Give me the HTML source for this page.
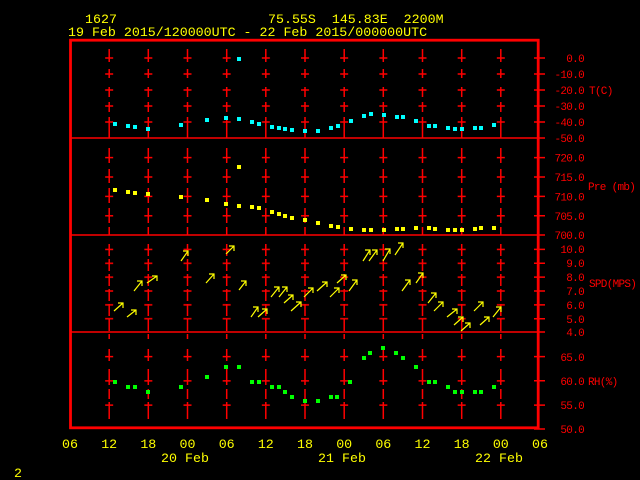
<!DOCTYPE html>
<html><head><meta charset="utf-8"><style>
html,body{margin:0;padding:0;background:#000;width:640px;height:480px;overflow:hidden}
svg{display:block}
text{font-family:"Liberation Mono",monospace}
</style></head><body>
<svg width="640" height="480" viewBox="0 0 640 480" xmlns="http://www.w3.org/2000/svg">
<defs>
<pattern id="pT" patternUnits="userSpaceOnUse" x="105.17" y="50" width="39.1667" height="16"><line x1="0" y1="8" x2="8" y2="8" stroke="#f00" stroke-width="1.5"/></pattern>
<pattern id="pP" patternUnits="userSpaceOnUse" x="105.17" y="147.9" width="39.1667" height="19.4"><line x1="0" y1="9.7" x2="8" y2="9.7" stroke="#f00" stroke-width="1.5"/></pattern>
<pattern id="pS" patternUnits="userSpaceOnUse" x="105.17" y="242.5" width="39.1667" height="13.86"><line x1="0" y1="6.93" x2="8" y2="6.93" stroke="#f00" stroke-width="1.5"/></pattern>
<pattern id="pR" patternUnits="userSpaceOnUse" x="105.17" y="344.5" width="39.1667" height="24.25"><line x1="0" y1="12.12" x2="8" y2="12.12" stroke="#f00" stroke-width="1.5"/></pattern>
</defs>
<g fill="#ffff00" font-size="13.3">
<text x="85" y="23">1627</text>
<text x="268" y="23" xml:space="preserve">75.55S  145.83E  2200M</text>
<text x="68" y="36">19 Feb 2015/120000UTC - 22 Feb 2015/000000UTC</text>
</g>
<!-- grid -->
<g stroke="#f00" stroke-width="1.5" fill="none">
<path stroke-dasharray="13 7 9 9 10 5 10 5 30" d="M109.2 49V138M148.3 49V138M187.5 49V138M226.7 49V138M265.8 49V138M305 49V138M344.2 49V138M383.3 49V138M422.5 49V138M461.7 49V138M500.8 49V138"/>
<path stroke-dasharray="15 6 14 5 15 5 15 4 12" d="M109.2 148V235M148.3 148V235M187.5 148V235M226.7 148V235M265.8 148V235M305 148V235M344.2 148V235M383.3 148V235M422.5 148V235M461.7 148V235M500.8 148V235"/>
<path stroke-dasharray="12 3" d="M109.2 244V339M148.3 244V339M187.5 244V339M226.7 244V339M265.8 244V339M305 244V339M344.2 244V339M383.3 244V339M422.5 244V339M461.7 244V339M500.8 244V339"/>
<path stroke-dasharray="12 8 16 4 10 3 17" d="M109.2 349V419M148.3 349V419M187.5 349V419M226.7 349V419M265.8 349V419M305 349V419M344.2 349V419M383.3 349V419M422.5 349V419M461.7 349V419M500.8 349V419"/>
</g>
<rect x="105" y="50" width="400" height="80" fill="url(#pT)"/>
<rect x="105" y="147.9" width="400" height="77.6" fill="url(#pP)"/>
<rect x="105" y="242.5" width="400" height="83.2" fill="url(#pS)"/>
<rect x="105" y="344.5" width="400" height="72.8" fill="url(#pR)"/>
<!-- frame -->
<g stroke="#f00">
<rect x="70.5" y="40.2" width="467.7" height="387.6" fill="none" stroke-width="2.8"/>
<path stroke-width="1.5" d="M70 138H545M70 235H545M70 332H545"/>
<path stroke-width="1.5" d="M534 58H545M534 74H545M534 90H545M534 106H545M534 122H545M534 157.6H545M534 177H545M534 196.4H545M534 215.8H545M534 249.4H545M534 263.3H545M534 277.1H545M534 291H545M534 304.9H545M534 318.7H545M534 356.6H545M534 380.8H545M534 405.1H545M534 429H545"/>
</g>
<!-- right labels -->
<g fill="#f00" font-size="11" text-anchor="end" letter-spacing="-0.7">
<text x="584" y="62">0.0</text><text x="584" y="78">-10.0</text><text x="584" y="94">-20.0</text><text x="584" y="110">-30.0</text><text x="584" y="126">-40.0</text><text x="584" y="142">-50.0</text>
<text x="584" y="161.5">720.0</text><text x="584" y="181">715.0</text><text x="584" y="200.5">710.0</text><text x="584" y="220">705.0</text><text x="584" y="239">700.0</text>
<text x="584" y="253">10.0</text><text x="584" y="267">9.0</text><text x="584" y="281">8.0</text><text x="584" y="295">7.0</text><text x="584" y="309">6.0</text><text x="584" y="323">5.0</text><text x="584" y="336">4.0</text>
<text x="584" y="361">65.0</text><text x="584" y="385">60.0</text><text x="584" y="409">55.0</text><text x="584" y="433">50.0</text>
</g>
<g fill="#f00" font-size="11" letter-spacing="-0.7">
<text x="589" y="94">T(C)</text>
<text x="588" y="190">Pre (mb)</text>
<text x="589" y="287">SPD(MPS)</text>
<text x="588" y="385">RH(%)</text>
</g>
<!-- T points -->
<g fill="#00ffff">
<rect x="113" y="122" width="4" height="4"/><rect x="126" y="124" width="4" height="4"/><rect x="133" y="125" width="4" height="4"/><rect x="146" y="127" width="4" height="4"/><rect x="179" y="123" width="4" height="4"/><rect x="205" y="118" width="4" height="4"/><rect x="224" y="116" width="4" height="4"/><rect x="237" y="117" width="4" height="4"/><rect x="237" y="57" width="4" height="4"/><rect x="250" y="120" width="4" height="4"/><rect x="257" y="122" width="4" height="4"/><rect x="270" y="125" width="4" height="4"/><rect x="277" y="126" width="4" height="4"/><rect x="283" y="127" width="4" height="4"/><rect x="290" y="128" width="4" height="4"/><rect x="303" y="129" width="4" height="4"/><rect x="316" y="129" width="4" height="4"/><rect x="329" y="126" width="4" height="4"/><rect x="336" y="124" width="4" height="4"/><rect x="349" y="119" width="4" height="4"/><rect x="362" y="114" width="4" height="4"/><rect x="369" y="112" width="4" height="4"/><rect x="382" y="113" width="4" height="4"/><rect x="395" y="115" width="4" height="4"/><rect x="401" y="115" width="4" height="4"/><rect x="414" y="119" width="4" height="4"/><rect x="427" y="124" width="4" height="4"/><rect x="433" y="124" width="4" height="4"/><rect x="446" y="126" width="4" height="4"/><rect x="453" y="127" width="4" height="4"/><rect x="460" y="127" width="4" height="4"/><rect x="473" y="126" width="4" height="4"/><rect x="479" y="126" width="4" height="4"/><rect x="492" y="123" width="4" height="4"/>
</g>
<!-- Pre points -->
<g fill="#ffff00">
<rect x="113" y="188" width="4" height="4"/><rect x="126" y="190" width="4" height="4"/><rect x="133" y="191" width="4" height="4"/><rect x="146" y="192" width="4" height="4"/><rect x="179" y="195" width="4" height="4"/><rect x="205" y="198" width="4" height="4"/><rect x="224" y="202" width="4" height="4"/><rect x="237" y="204" width="4" height="4"/><rect x="237" y="165" width="4" height="4"/><rect x="250" y="205" width="4" height="4"/><rect x="257" y="206" width="4" height="4"/><rect x="270" y="210" width="4" height="4"/><rect x="277" y="212" width="4" height="4"/><rect x="283" y="214" width="4" height="4"/><rect x="290" y="216" width="4" height="4"/><rect x="303" y="218" width="4" height="4"/><rect x="316" y="221" width="4" height="4"/><rect x="329" y="224" width="4" height="4"/><rect x="336" y="225" width="4" height="4"/><rect x="349" y="227" width="4" height="4"/><rect x="362" y="228" width="4" height="4"/><rect x="369" y="228" width="4" height="4"/><rect x="382" y="228" width="4" height="4"/><rect x="395" y="227" width="4" height="4"/><rect x="401" y="227" width="4" height="4"/><rect x="414" y="226" width="4" height="4"/><rect x="427" y="226" width="4" height="4"/><rect x="433" y="227" width="4" height="4"/><rect x="446" y="228" width="4" height="4"/><rect x="453" y="228" width="4" height="4"/><rect x="460" y="228" width="4" height="4"/><rect x="473" y="227" width="4" height="4"/><rect x="479" y="226" width="4" height="4"/><rect x="492" y="226" width="4" height="4"/>
</g>
<!-- wind arrows -->
<g stroke="#ffff00" stroke-width="1.2" fill="none">
<path d="M114 311L123 303M118 303H123V308"/>
<path d="M127 317L136 310M131 310H136V315"/>
<path d="M134 291L142 281M137 281H142V286"/>
<path d="M147 283L157 276M152 276H157V281"/>
<path d="M181 261L188 251M183 251H188V256"/>
<path d="M226 254L234 246M229 246H234V251"/>
<path d="M206 283L214 274M209 274H214V279"/>
<path d="M239 290L246 281M241 281H246V286"/>
<path d="M251 317L258 307M253 307H258V312"/>
<path d="M258 317L267 309M262 309H267V314"/>
<path d="M271 297L279 287M274 287H279V292"/>
<path d="M279 297L287 287M282 287H287V292"/>
<path d="M284 303L293 295M288 295H293V300"/>
<path d="M291 311L301 302M296 302H301V307"/>
<path d="M304 297L313 288M308 288H313V293"/>
<path d="M317 291L327 282M322 282H327V287"/>
<path d="M330 297L339 288M334 288H339V293"/>
<path d="M337 283L346 275M341 275H346V280"/>
<path d="M349 291L357 280M352 280H357V285"/>
<path d="M363 261L370 250M365 250H370V255"/>
<path d="M369 261L377 250M372 250H377V255"/>
<path d="M383 261L390 249M385 249H390V254"/>
<path d="M395 255L403 243M398 243H403V248"/>
<path d="M402 291L410 280M405 280H410V285"/>
<path d="M416 283L423 273M418 273H423V278"/>
<path d="M428 303L436 293M431 293H436V298"/>
<path d="M434 311L443 302M438 302H443V307"/>
<path d="M447 317L457 309M452 309H457V314"/>
<path d="M454 325L463 317M458 317H463V322"/>
<path d="M461 331L470 323M465 323H470V328"/>
<path d="M474 311L483 302M478 302H483V307"/>
<path d="M480 325L489 317M484 317H489V322"/>
<path d="M493 317L501 307M496 307H501V312"/>
</g>
<!-- RH points -->
<g fill="#00ff00">
<rect x="113" y="380" width="4" height="4"/><rect x="126" y="385" width="4" height="4"/><rect x="133" y="385" width="4" height="4"/><rect x="146" y="390" width="4" height="4"/><rect x="179" y="385" width="4" height="4"/><rect x="205" y="375" width="4" height="4"/><rect x="224" y="365" width="4" height="4"/><rect x="237" y="365" width="4" height="4"/><rect x="250" y="380" width="4" height="4"/><rect x="257" y="380" width="4" height="4"/><rect x="270" y="385" width="4" height="4"/><rect x="277" y="385" width="4" height="4"/><rect x="283" y="390" width="4" height="4"/><rect x="290" y="395" width="4" height="4"/><rect x="303" y="399" width="4" height="4"/><rect x="316" y="399" width="4" height="4"/><rect x="329" y="395" width="4" height="4"/><rect x="335" y="395" width="4" height="4"/><rect x="348" y="380" width="4" height="4"/><rect x="362" y="356" width="4" height="4"/><rect x="368" y="351" width="4" height="4"/><rect x="381" y="346" width="4" height="4"/><rect x="394" y="351" width="4" height="4"/><rect x="401" y="356" width="4" height="4"/><rect x="414" y="365" width="4" height="4"/><rect x="427" y="380" width="4" height="4"/><rect x="433" y="380" width="4" height="4"/><rect x="446" y="385" width="4" height="4"/><rect x="453" y="390" width="4" height="4"/><rect x="460" y="390" width="4" height="4"/><rect x="473" y="390" width="4" height="4"/><rect x="479" y="390" width="4" height="4"/><rect x="492" y="385" width="4" height="4"/>
</g>
<!-- time axis -->
<g fill="#ffff00" font-size="13.3" text-anchor="middle">
<text x="70" y="448">06</text><text x="109.2" y="448">12</text><text x="148.3" y="448">18</text><text x="187.5" y="448">00</text><text x="226.7" y="448">06</text><text x="265.8" y="448">12</text><text x="305" y="448">18</text><text x="344.2" y="448">00</text><text x="383.3" y="448">06</text><text x="422.5" y="448">12</text><text x="461.7" y="448">18</text><text x="500.8" y="448">00</text><text x="540" y="448">06</text>
<text x="185" y="462">20 Feb</text><text x="342" y="462">21 Feb</text><text x="499" y="462">22 Feb</text>
</g>
<text x="14" y="477" fill="#ffff00" font-size="13.3">2</text>
</svg>
</body></html>
